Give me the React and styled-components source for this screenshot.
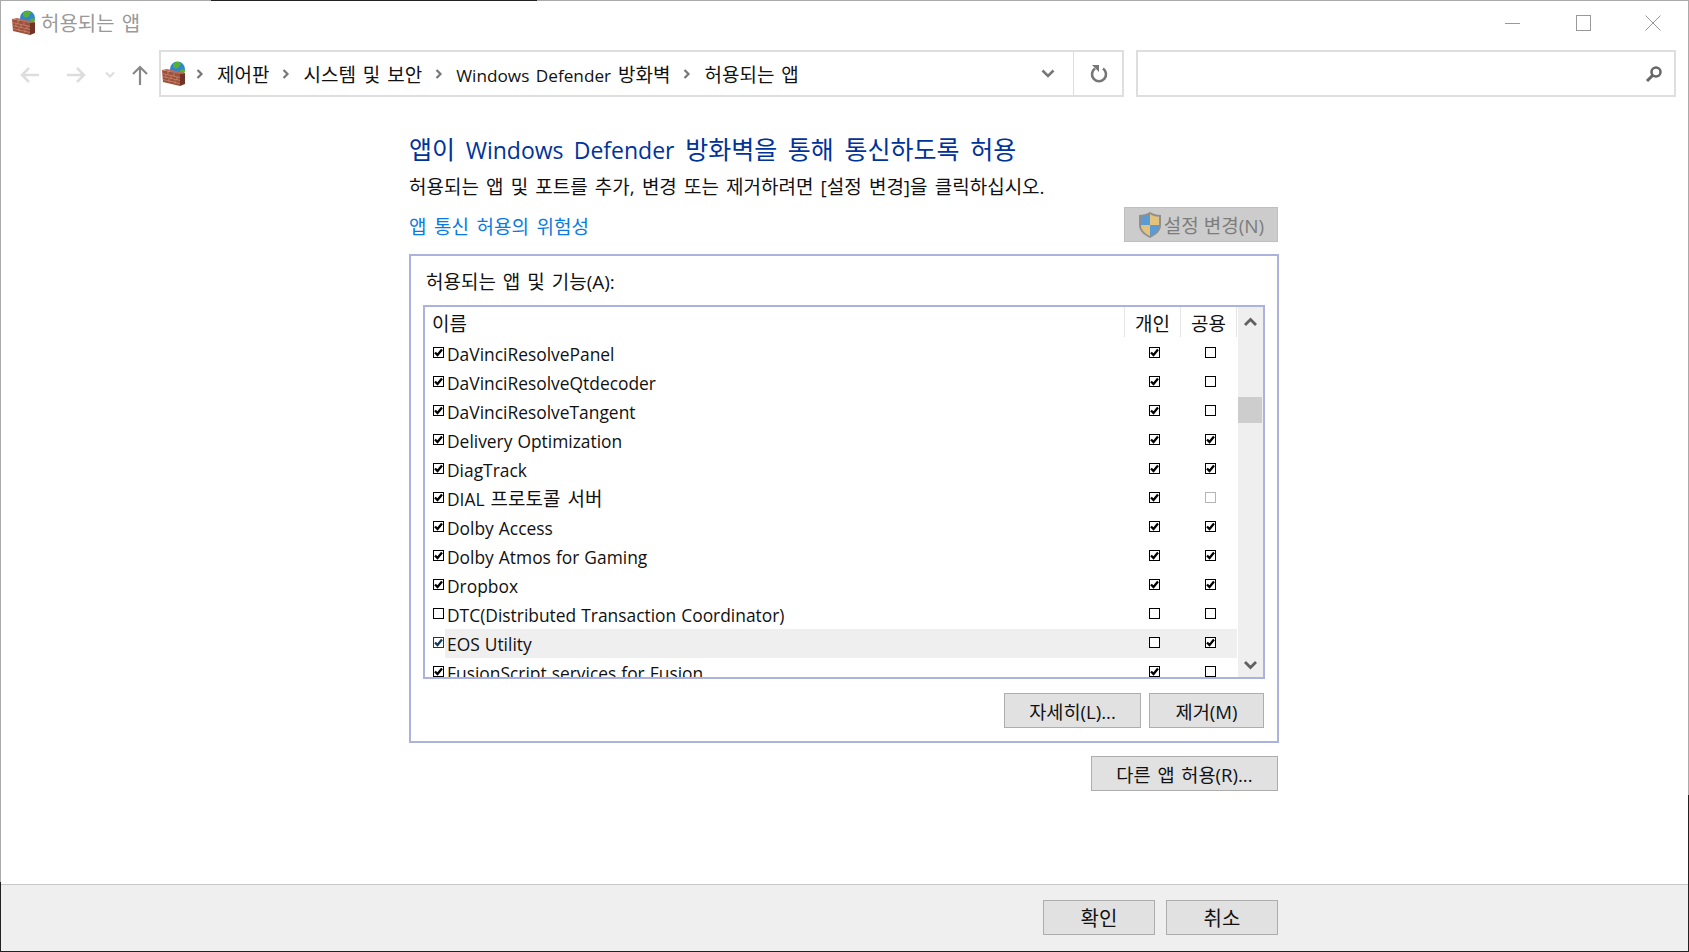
import React from 'react';
import styled, { createGlobalStyle } from 'styled-components';

const GlobalStyle = createGlobalStyle`
  html, body {
    margin: 0;
    padding: 0;
    background: #fff;
  }
  * {
    box-sizing: border-box;
  }
`;

const FONT = `"Open Sans", "Noto Sans CJK KR", sans-serif`;

const apps = [
  { name: 'DaVinciResolvePanel', on: true, priv: true, pub: false },
  { name: 'DaVinciResolveQtdecoder', on: true, priv: true, pub: false },
  { name: 'DaVinciResolveTangent', on: true, priv: true, pub: false },
  { name: 'Delivery Optimization', on: true, priv: true, pub: true },
  { name: 'DiagTrack', on: true, priv: true, pub: true },
  { name: 'DIAL', hangul: '프로토콜 서버', on: true, priv: true, pub: false, faint: true },
  { name: 'Dolby Access', on: true, priv: true, pub: true },
  { name: 'Dolby Atmos for Gaming', on: true, priv: true, pub: true },
  { name: 'Dropbox', on: true, priv: true, pub: true },
  { name: 'DTC(Distributed Transaction Coordinator)', on: false, priv: false, pub: false },
  { name: 'EOS Utility', on: true, priv: false, pub: true, active: true },
  { name: 'FusionScript services for Fusion', on: true, priv: true, pub: false },
];

const FirewallIcon = () => (
  <svg width="26" height="26" viewBox="0 0 26 26">
    <circle cx="16.500" cy="8" r="7.500" fill="#2f86d0" />
    <path d="M12 3c2-2.500 6-2.500 8-1 0 2-2 3-3 5-2 1-4 0-5-1z" fill="#57b030" />
    <path d="M19 9c2-1 4-1 5 0 0 2-1 3-2 4-2 0-3-2-3-4z" fill="#57b030" />
    <path d="M1 9l18 4v12L2 21z" fill="#a0503a" />
    <path d="M19 13l5-1v11l-5 2z" fill="#6f3425" />
    <path d="M1 9l5-1 18 4-5 1z" fill="#b86c54" />
    <path d="M1.200 12.500L19 16.500M1.500 15.500L19 19.500M1.800 18.500L19 22.500M7 10.500v3M13 12v3M5 14v3M10 15v3M16 16v3M8 18v3M14 19.500v3" stroke="#c98f7a" strokeWidth=".7" fill="none" />
  </svg>
);

const ShieldIcon = () => (
  <svg width="24" height="26" viewBox="0 0 24 26">
    <path d="M12 0c3 2 7 3 11 3v10c0 6-5 10-11 13C6 23 1 19 1 13V3c4 0 8-1 11-3z" fill="#8f8f8f" />
    <path d="M12 2v11H3V4.800C6.500 4.600 10 3.500 12 2z" fill="#5b9bd5" />
    <path d="M12 2c2 1.500 5.500 2.600 9 2.800V13h-9z" fill="#e3c27c" />
    <path d="M3 13h9v11c-4.500-2-9-5.500-9-11z" fill="#e3c27c" />
    <path d="M12 13h9c0 5.500-4.500 9-9 11z" fill="#5b9bd5" />
  </svg>
);

const Crumb = () => (
  <svg width="8" height="10" viewBox="0 0 8 10">
    <path d="M1.500 1l4 4-4 4" stroke="#777" strokeWidth="2.200" fill="none" />
  </svg>
);

const Chevron = ({ up }) => (
  <svg width="13" height="9" viewBox="0 0 13 9">
    <path d={up ? 'M1 8l5.500-5.500L12 8' : 'M1 1l5.500 5.500L12 1'} stroke="#606060" strokeWidth="2.800" fill="none" />
  </svg>
);

const Check = ({ checked, faint, active }) => (
  <CheckBox $faint={faint} $active={active}>
    {checked && (
      <svg width="9" height="9" viewBox="0 0 9 9">
        <path d="M1 4.500l2.500 2.500L8 1.500" stroke={active ? '#123a5c' : '#000'} strokeWidth="2.300" fill="none" />
      </svg>
    )}
  </CheckBox>
);

const App = () => (
  <Window>
    <GlobalStyle />
    <TopEdge />
    <LeftEdge />
    <RightEdge />
    <TitleBar>
      <FirewallIcon />
      <TitleText>허용되는 앱</TitleText>
      <WindowButtons>
        <WinButton>
          <svg width="16" height="16" viewBox="0 0 16 16"><path d="M0 8.500h15" stroke="#999" /></svg>
        </WinButton>
        <WinButton>
          <svg width="15" height="16" viewBox="0 0 15 16"><rect x=".5" y=".5" width="14" height="15" fill="none" stroke="#999" /></svg>
        </WinButton>
        <WinButton>
          <svg width="16" height="16" viewBox="0 0 16 16"><path d="M.5.500l15 15M15.500.500l-15 15" stroke="#999" /></svg>
        </WinButton>
      </WindowButtons>
    </TitleBar>

    <NavBar>
      <NavArrows>
        <svg width="20" height="18" viewBox="0 0 20 18"><path d="M19 9H2M9 2L2 9l7 7" stroke="#ddd" strokeWidth="2.500" fill="none" /></svg>
        <NavGap $width={26} />
        <svg width="20" height="18" viewBox="0 0 20 18"><path d="M1 9h17M11 2l7 7-7 7" stroke="#ddd" strokeWidth="2.500" fill="none" /></svg>
        <NavGap $width={19} />
        <svg width="10" height="8" viewBox="0 0 10 8"><path d="M1 1.500l4 4 4-4" stroke="#ddd" strokeWidth="2" fill="none" /></svg>
        <NavGap $width={16} />
        <svg width="18" height="20" viewBox="0 0 18 20"><path d="M9 20V2M2 9l7-7 7 7" stroke="#888" strokeWidth="2.200" fill="none" /></svg>
      </NavArrows>
      <AddressBar>
        <FirewallIcon />
        <Crumbs>
          <Crumb /><CrumbText>제어판</CrumbText>
          <Crumb /><CrumbText>시스템 및 보안</CrumbText>
          <Crumb /><CrumbText><CrumbLatin>Windows Defender</CrumbLatin> 방화벽</CrumbText>
          <Crumb /><CrumbText>허용되는 앱</CrumbText>
        </Crumbs>
        <DropButton>
          <svg width="14" height="10" viewBox="0 0 14 10"><path d="M1.500 1.500L7 7l5.500-5.500" stroke="#777" strokeWidth="2.600" fill="none" /></svg>
        </DropButton>
        <RefreshButton>
          <svg width="18" height="20" viewBox="0 0 18 20">
            <path d="M5 4.500a7 7 0 1 0 8 0" stroke="#777" strokeWidth="2.600" fill="none" />
            <path d="M2 1h7v7z" fill="#777" />
          </svg>
        </RefreshButton>
      </AddressBar>
      <SearchBox>
        <svg width="18" height="18" viewBox="0 0 18 18">
          <circle cx="11" cy="7" r="4.500" stroke="#666" strokeWidth="2.500" fill="none" />
          <path d="M7.500 10.500L2 16" stroke="#666" strokeWidth="3" />
        </svg>
      </SearchBox>
    </NavBar>

    <Content>
      <Column>
        <Heading>앱이 <HeadingLatin>Windows Defender</HeadingLatin> 방화벽을 통해 통신하도록 허용</Heading>
        <Description>허용되는 앱 및 포트를 추가, 변경 또는 제거하려면 [설정 변경]을 클릭하십시오.</Description>
        <LinkRow>
          <RiskLink>앱 통신 허용의 위험성</RiskLink>
          <ChangeButton>
            <ShieldIcon />
            설정 변경(N)
          </ChangeButton>
        </LinkRow>
        <Panel>
          <PanelLabel>허용되는 앱 및 기능(A):</PanelLabel>
          <ListBox>
            <ListMain>
              <HeaderRow>
                <NameHead>이름</NameHead>
                <ColHead>개인</ColHead>
                <ColHead>공용</ColHead>
              </HeaderRow>
              <Rows>
                {apps.map((app) => (
                  <Row key={app.name}>
                    <NameCheck>
                      <Check checked={app.on} active={app.active} />
                    </NameCheck>
                    <RowName $active={app.active}>
                      {app.name}
                      {app.hangul && <RowHangul>{app.hangul}</RowHangul>}
                    </RowName>
                    <RowCell $active={app.active}>
                      <Check checked={app.priv} />
                    </RowCell>
                    <RowCell $active={app.active}>
                      <Check checked={app.pub} faint={app.faint} />
                    </RowCell>
                  </Row>
                ))}
              </Rows>
            </ListMain>
            <ScrollBar>
              <ScrollArrow><Chevron up /></ScrollArrow>
              <ScrollThumb />
              <ScrollArrow $end><Chevron /></ScrollArrow>
            </ScrollBar>
          </ListBox>
          <PanelButtons>
            <Button $width={137} $size={18.6}>자세히(L)...</Button>
            <Button $width={115} $size={18.6}>제거(M)</Button>
          </PanelButtons>
        </Panel>
        <OtherRow>
          <Button $width={187} $size={18.6}>다른 앱 허용(R)...</Button>
        </OtherRow>
      </Column>
    </Content>

    <Footer>
      <Button $width={112} $size={20}>확인</Button>
      <Button $width={112} $size={20}>취소</Button>
    </Footer>
  </Window>
);

const Window = styled.div`
  position: relative;
  display: flex;
  flex-direction: column;
  width: 1689px;
  height: 952px;
  overflow: hidden;
  background: #fff;
  border-top: 1px solid #aaa;
  border-left: 1px solid #aaa;
  border-right: 1px solid #aaa;
  border-bottom: 1px solid #222;
  font-family: ${FONT};
  font-size: 19px;
  word-spacing: 2px;
  color: #111;
`;

const TopEdge = styled.div`
  position: fixed;
  top: 0;
  left: 211px;
  width: 326px;
  height: 1px;
  background: #222;
`;

const LeftEdge = styled.div`
  position: fixed;
  top: 882px;
  left: 0;
  width: 1px;
  height: 70px;
  background: #222;
`;

const RightEdge = styled.div`
  position: fixed;
  top: 795px;
  left: 1688px;
  width: 1px;
  height: 157px;
  background: #222;
`;

const TitleBar = styled.div`
  display: flex;
  align-items: center;
  height: 43px;
  padding-left: 10px;
  flex-shrink: 0;
`;

const TitleText = styled.div`
  margin-left: 4px;
  font-size: 20px;
  color: #999;
`;

const WindowButtons = styled.div`
  display: flex;
  margin-left: auto;
`;

const WinButton = styled.div`
  display: flex;
  align-items: center;
  justify-content: center;
  width: 70px;
  height: 43px;
`;

const NavBar = styled.div`
  display: flex;
  height: 47px;
  margin-top: 6px;
  padding-right: 12px;
  flex-shrink: 0;
`;

const NavArrows = styled.div`
  display: flex;
  align-items: center;
  width: 150px;
  padding: 3px 0 0 19px;
  margin-right: 8px;
`;

const NavGap = styled.span`
  width: ${(p) => p.$width}px;
  flex-shrink: 0;
`;

const AddressBar = styled.div`
  display: flex;
  align-items: center;
  width: 965px;
  border: 2px solid #dedede;
`;

const Crumbs = styled.div`
  display: flex;
  align-items: center;
  gap: 13px;
  flex: 1;
  margin-left: 9px;
`;

const CrumbText = styled.span`
  color: #111;
  white-space: nowrap;
`;

const CrumbLatin = styled.span`
  font-size: 17.200px;
`;

const DropButton = styled.div`
  display: flex;
  align-items: center;
  justify-content: center;
  width: 50px;
  height: 100%;
`;

const RefreshButton = styled.div`
  display: flex;
  align-items: center;
  justify-content: center;
  width: 49px;
  height: 100%;
  padding-left: 1px;
  border-left: 1px solid #dedede;
`;

const SearchBox = styled.div`
  display: flex;
  align-items: center;
  justify-content: flex-end;
  width: 540px;
  margin-left: 12px;
  padding-right: 11px;
  border: 2px solid #dedede;
`;

const Content = styled.div`
  display: flex;
  flex: 1;
  padding-left: 408px;
`;

const Column = styled.div`
  display: flex;
  flex-direction: column;
  width: 870px;
  padding-top: 33px;
`;

const Heading = styled.div`
  height: 40px;
  font-size: 25px;
  line-height: 38px;
  word-spacing: 4.200px;
  color: #003399;
`;

const HeadingLatin = styled.span`
  font-size: 23px;
`;

const Description = styled.div`
  height: 34px;
  line-height: 34px;
  word-spacing: 2.200px;
`;

const LinkRow = styled.div`
  display: flex;
  justify-content: space-between;
  align-items: flex-end;
  height: 38px;
`;

const RiskLink = styled.a`
  align-self: flex-start;
  padding-top: 10px;
  line-height: 26px;
  word-spacing: 2.600px;
  color: #0a7ae0;
`;

const ChangeButton = styled.div`
  display: flex;
  align-items: center;
  justify-content: center;
  gap: 2px;
  width: 154px;
  height: 35px;
  margin-right: 1px;
  background: #cccccc;
  border: 1px solid #bfbfbf;
  word-spacing: 0;
  color: #7d7d7d;
`;

const Panel = styled.div`
  display: flex;
  flex-direction: column;
  height: 489px;
  margin-top: 12px;
  padding: 0 12px;
  border: 2px solid #adb1dd;
`;

const PanelLabel = styled.div`
  height: 49px;
  padding-left: 3px;
  line-height: 52px;
`;

const ListBox = styled.div`
  display: flex;
  height: 374px;
  flex-shrink: 0;
  border: 2px solid #adb1dd;
`;

const ListMain = styled.div`
  display: flex;
  flex-direction: column;
  flex: 1;
  min-width: 0;
`;

const HeaderRow = styled.div`
  display: flex;
  align-items: stretch;
  height: 30px;
  padding-right: 1px;
  flex-shrink: 0;
`;

const NameHead = styled.div`
  flex: 1;
  padding-left: 7px;
  line-height: 34px;
`;

const ColHead = styled.div`
  width: 56px;
  border-left: 1px solid #e5e5e5;
  line-height: 34px;
  text-align: center;

  &:last-child {
    width: 57px;
    border-right: 1px solid #e5e5e5;
  }
`;

const Rows = styled.div`
  flex: 1;
  margin-top: 2px;
  overflow: hidden;
`;

const Row = styled.div`
  display: flex;
  align-items: center;
  height: 29px;
  padding-right: 1px;
`;

const NameCheck = styled.div`
  display: flex;
  width: 20px;
  padding-left: 8px;
  flex-shrink: 0;
`;

const RowName = styled.div`
  flex: 1;
  height: 29px;
  padding-left: 2px;
  font-size: 17.400px;
  line-height: 31px;
  word-spacing: .5px;
  white-space: nowrap;
  background: ${(p) => (p.$active ? '#efefef' : 'transparent')};
`;

const RowHangul = styled.span`
  margin-left: 6px;
  font-size: 19px;
  word-spacing: 2px;
`;

const RowCell = styled.div`
  display: flex;
  align-items: center;
  justify-content: center;
  width: 56px;
  height: 29px;
  padding-left: 2px;
  background: ${(p) => (p.$active ? '#efefef' : 'transparent')};
`;

const CheckBox = styled.span`
  display: flex;
  align-items: center;
  justify-content: center;
  width: 11px;
  height: 11px;
  margin-top: -2px;
  background: #fff;
  border: 1px solid ${(p) => (p.$faint ? '#b5b5b5' : p.$active ? '#123a5c' : '#000')};
`;

const ScrollBar = styled.div`
  display: flex;
  flex-direction: column;
  width: 25px;
  background: #efefef;
  flex-shrink: 0;
`;

const ScrollArrow = styled.div`
  display: flex;
  align-items: center;
  justify-content: center;
  height: ${(p) => (p.$end ? '24px' : '28px')};
  flex-shrink: 0;
  margin-top: ${(p) => (p.$end ? 'auto' : '0')};
`;

const ScrollThumb = styled.div`
  width: 24px;
  height: 26px;
  margin-top: 62px;
  background: #cdcdcd;
`;

const PanelButtons = styled.div`
  display: flex;
  justify-content: flex-end;
  gap: 8px;
  margin-top: 14px;
  padding-right: 1px;
`;

const Button = styled.div`
  display: flex;
  align-items: center;
  justify-content: center;
  width: ${(p) => p.$width}px;
  height: 35px;
  background: #e1e1e1;
  border: 1px solid #adadad;
  font-size: ${(p) => p.$size}px;
  color: #111;
  white-space: nowrap;
`;

const OtherRow = styled.div`
  display: flex;
  justify-content: flex-end;
  margin-top: 13px;
  padding-right: 1px;
`;

const Footer = styled.div`
  display: flex;
  justify-content: flex-end;
  gap: 11px;
  height: 67px;
  padding: 15px 410px 0 0;
  background: #efefef;
  border-top: 1px solid #c8c8c8;
  flex-shrink: 0;
`;

export default App;
